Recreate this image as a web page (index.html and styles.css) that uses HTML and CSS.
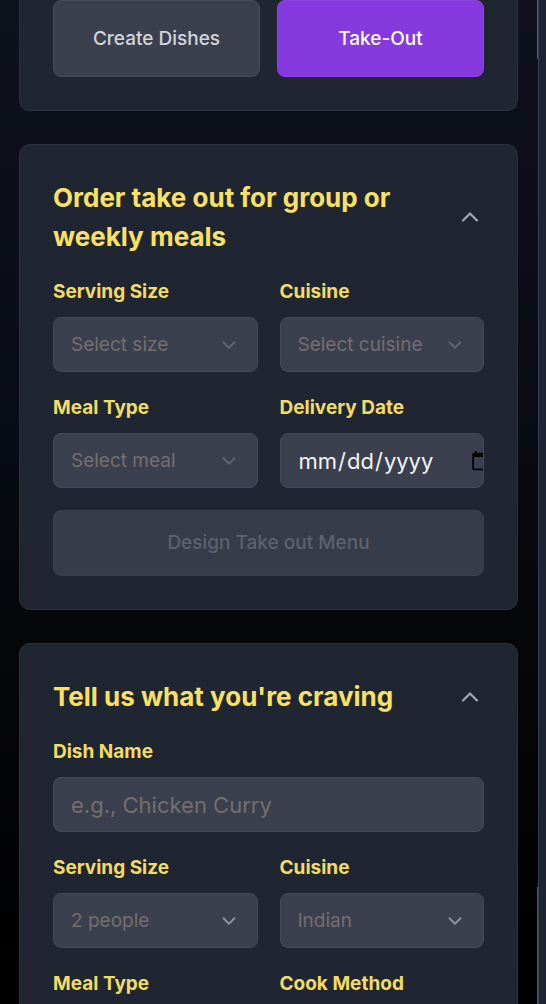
FILE: index.html
```
<!DOCTYPE html>
<html lang="en">
<head>
<meta charset="utf-8">
<meta name="viewport" content="width=device-width, initial-scale=1">
<title>Meal planner</title>
<link rel="stylesheet" href="styles.css">
</head>
<body>
<svg class="defs" aria-hidden="true">
  <symbol id="chevron-down" viewBox="0 0 24 24"><path d="m6 9 6 6 6-6"/></symbol>
  <symbol id="chevron-up" viewBox="0 0 24 24"><path d="m18 15-6-6-6 6"/></symbol>
</svg>
<div class="page">
  <main class="main">
    <section class="card card-top">
      <div class="modes">
        <button class="mode" type="button">Create Dishes</button>
        <button class="mode mode-active" type="button">Take-Out</button>
      </div>
    </section>

    <section class="card">
      <header class="card-header">
        <h2 class="title">Order take out for group or weekly meals</h2>
        <button class="toggle" type="button" aria-label="Collapse order form"><svg class="icon"><use href="#chevron-up"/></svg></button>
      </header>
      <form class="fields">
        <div class="field">
          <label class="label" for="order-size">Serving Size</label>
          <div class="control">
            <select class="select" id="order-size"><option>Select size</option></select>
            <svg class="chevron chevron-dim"><use href="#chevron-down"/></svg>
          </div>
        </div>
        <div class="field">
          <label class="label" for="order-cuisine">Cuisine</label>
          <div class="control">
            <select class="select" id="order-cuisine"><option>Select cuisine</option></select>
            <svg class="chevron chevron-dim"><use href="#chevron-down"/></svg>
          </div>
        </div>
        <div class="field">
          <label class="label" for="order-meal">Meal Type</label>
          <div class="control">
            <select class="select" id="order-meal"><option>Select meal</option></select>
            <svg class="chevron chevron-dim"><use href="#chevron-down"/></svg>
          </div>
        </div>
        <div class="field">
          <label class="label" for="order-date">Delivery Date</label>
          <div class="control">
            <input class="date" id="order-date" type="date">
          </div>
        </div>
        <button class="submit wide" type="button" disabled>Design Take out Menu</button>
      </form>
    </section>

    <section class="card">
      <header class="card-header">
        <h2 class="title">Tell us what you're craving</h2>
        <button class="toggle" type="button" aria-label="Collapse craving form"><svg class="icon"><use href="#chevron-up"/></svg></button>
      </header>
      <form class="fields">
        <div class="field wide">
          <label class="label" for="dish-name">Dish Name</label>
          <div class="control">
            <input class="text" id="dish-name" type="text" placeholder="e.g., Chicken Curry">
          </div>
        </div>
        <div class="field">
          <label class="label" for="dish-size">Serving Size</label>
          <div class="control">
            <select class="select" id="dish-size"><option>2 people</option></select>
            <svg class="chevron"><use href="#chevron-down"/></svg>
          </div>
        </div>
        <div class="field">
          <label class="label" for="dish-cuisine">Cuisine</label>
          <div class="control">
            <select class="select" id="dish-cuisine"><option>Indian</option></select>
            <svg class="chevron"><use href="#chevron-down"/></svg>
          </div>
        </div>
        <div class="field">
          <label class="label" for="dish-meal">Meal Type</label>
          <div class="control">
            <select class="select" id="dish-meal"><option></option></select>
          </div>
        </div>
        <div class="field">
          <label class="label" for="dish-method">Cook Method</label>
          <div class="control">
            <select class="select" id="dish-method"><option></option></select>
          </div>
        </div>
      </form>
    </section>
  </main>
  <aside class="rail"></aside>
</div>
</body>
</html>
```
FILE: styles.css
```
* { box-sizing: border-box; }

body {
  margin: 0;
  background: #000;
  font-family: Inter, "Liberation Sans", sans-serif;
  font-size: 19px;
  line-height: 28px;
}

button, input, select { font: inherit; margin: 0; }

.defs { display: none; }

.page {
  display: flex;
  height: 100vh;
  overflow: hidden;
  background: linear-gradient(#0e121c 0%, #0c0f1a 18%, #070b13 45%, #06070b 62%, #000 100%);
}

.main {
  flex: 1;
  min-width: 0;
  display: flex;
  flex-direction: column;
  gap: 33px;
  padding: 0 20px 0 19px;
}

.rail {
  position: relative;
  width: 8px;
  background: #1e2433;
  border-left: 1px solid #3a3f4d;
}

.rail::before,
.rail::after {
  content: "";
  position: absolute;
  left: -2px;
  width: 1px;
  background: #565a65;
}

.rail::before { top: 0; height: 59px; }
.rail::after { bottom: 0; height: 117px; }

.card {
  flex: none;
  padding: 33px;
  background: #202631;
  border: 1px solid #2b323e;
  border-radius: 11px;
}

.card-top {
  padding-top: 0;
  border-top: 0;
  border-radius: 0 0 11px 11px;
}

.modes {
  display: grid;
  grid-template-columns: 1fr 1fr;
  gap: 17px;
}

.mode {
  height: 77px;
  padding: 0;
  color: #d1d5db;
  font-weight: 500;
  background: #3b404e;
  border: 1px solid #474c59;
  border-radius: 8px;
}

.mode-active {
  color: #fff;
  background: #8639de;
  border-color: #8b45df;
}

.card-header {
  display: flex;
  align-items: center;
  justify-content: space-between;
  margin-bottom: 22px;
}

.title {
  margin: 0;
  max-width: 370px;
  color: #fae164;
  font-size: 26px;
  font-weight: 700;
  line-height: 39px;
}

.toggle {
  display: flex;
  padding: 0;
  color: #9ca3af;
  background: none;
  border: 0;
}

.icon {
  width: 28px;
  height: 28px;
  fill: none;
  stroke: currentColor;
  stroke-width: 2;
  stroke-linecap: round;
  stroke-linejoin: round;
}

.fields {
  display: grid;
  grid-template-columns: 1fr 1fr;
  gap: 22px;
}

.wide { grid-column: 1 / -1; }

.field {
  display: flex;
  flex-direction: column;
  gap: 11px;
  min-width: 0;
}

.label {
  color: #f3dc64;
  font-weight: 700;
}

.control {
  display: grid;
  align-items: center;
  height: 55px;
  background: #3b404e;
  border: 1px solid #454a57;
  border-radius: 8px;
  overflow: hidden;
}

.select,
.text {
  grid-area: 1 / 1;
  width: 100%;
  height: 53px;
  padding: 0 17px;
  color: #746f6e;
  background: none;
  border: 0;
  appearance: none;
}

.text { font-size: 22px; }
.text::placeholder { color: #746f6e; opacity: 1; }

.chevron {
  grid-area: 1 / 1;
  justify-self: end;
  width: 22px;
  height: 22px;
  margin-right: 17px;
  fill: none;
  stroke: #8d929d;
  stroke-width: 2;
  stroke-linecap: round;
  stroke-linejoin: round;
  pointer-events: none;
}

.chevron-dim { stroke: #62656f; }

.date {
  width: 196px;
  height: 53px;
  margin-left: 17px;
  padding: 0;
  color: #f3f4f6;
  font-size: 22px;
  background: none;
  border: 0;
}

.submit {
  height: 66px;
  padding: 0;
  color: #5d626e;
  font-weight: 500;
  background: #363c48;
  border: 1px solid #3b404c;
  border-radius: 8px;
}
```
